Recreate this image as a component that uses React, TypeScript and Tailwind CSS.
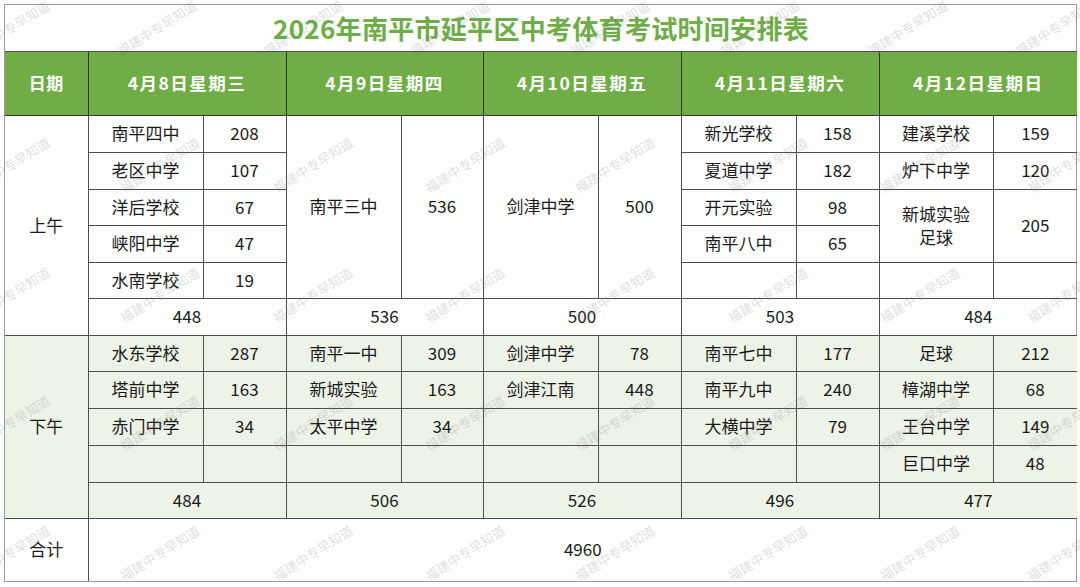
import React from "react";

const FONT = '"Noto Sans CJK SC", "Noto Sans", sans-serif';

type Cell = { t?: React.ReactNode; rs?: number; cs?: number };

const td = "border border-[#4d4d4d] p-0 text-center align-middle";

function Row({ h, cells, bg }: { h: number; cells: Cell[]; bg?: string }) {
  return (
    <tr style={{ height: h }} className={bg}>
      {cells.map((c, i) => (
        <td key={i} rowSpan={c.rs} colSpan={c.cs} className={td}>
          {c.t}
        </td>
      ))}
    </tr>
  );
}

const WM_ROWS: { y: number; xs: number[] }[] = [
  { y: 28, xs: [10, 157, 303, 450, 610, 760, 908, 1055] },
  { y: 165, xs: [10, 160, 313, 465, 615, 768, 920, 1067] },
  { y: 295, xs: [10, 160, 313, 465, 615, 768, 920, 1067] },
  { y: 423, xs: [10, 160, 313, 465, 615, 768, 920, 1067] },
  { y: 553, xs: [10, 160, 313, 465, 615, 768, 920, 1067] },
];

export default function App() {
  const widths = [83, 115, 83, 115, 82, 115, 83, 115, 83, 114, 84];
  const heads = ["4月8日星期三", "4月9日星期四", "4月10日星期五", "4月11日星期六", "4月12日星期日"];
  const pm = "bg-[#eef3e8]";
  return (
    <div
      className="relative w-[1080px] h-[587px] bg-white overflow-hidden text-[#1a1a1a]"
      style={{ fontFamily: FONT }}
    >
      <div className="ml-[4px] mt-[4px] w-[1073px] border border-[#9c9c9c]">
        <table className="table-fixed border-collapse border-hidden w-full text-[17px] leading-[1.35]">
          <colgroup>
            {widths.map((w, i) => (
              <col key={i} style={{ width: w }} />
            ))}
          </colgroup>
          <tbody>
            <tr className="h-[46px]">
              <td colSpan={11} className={td + " text-[26px] font-bold text-[#6fad4a] tracking-[0.3px]"}>
                2026年南平市延平区中考体育考试时间安排表
              </td>
            </tr>
            <tr className="h-[64px] bg-[#70ad47] text-white font-bold">
              <td className={td + " border-[#333] tracking-[0.5px]"}>日期</td>
              {heads.map((h) => (
                <td key={h} colSpan={2} className={td + " border-[#333] text-[17.5px] tracking-[1.5px]"}>
                  {h}
                </td>
              ))}
            </tr>
            <Row
              h={37}
              cells={[
                { t: "上午", rs: 6 },
                { t: "南平四中" },
                { t: "208" },
                { t: "南平三中", rs: 5 },
                { t: "536", rs: 5 },
                { t: "剑津中学", rs: 5 },
                { t: "500", rs: 5 },
                { t: "新光学校" },
                { t: "158" },
                { t: "建溪学校" },
                { t: "159" },
              ]}
            />
            <Row
              h={37}
              cells={[
                { t: "老区中学" },
                { t: "107" },
                { t: "夏道中学" },
                { t: "182" },
                { t: "炉下中学" },
                { t: "120" },
              ]}
            />
            <Row
              h={36}
              cells={[
                { t: "洋后学校" },
                { t: "67" },
                { t: "开元实验" },
                { t: "98" },
                {
                  t: (
                    <>
                      新城实验
                      <br />
                      足球
                    </>
                  ),
                  rs: 2,
                },
                { t: "205", rs: 2 },
              ]}
            />
            <Row
              h={37}
              cells={[{ t: "峡阳中学" }, { t: "47" }, { t: "南平八中" }, { t: "65" }]}
            />
            <Row
              h={36}
              cells={[{ t: "水南学校" }, { t: "19" }, {}, {}, {}, {}]}
            />
            <Row
              h={37}
              cells={[
                { t: "448", cs: 2 },
                { t: "536", cs: 2 },
                { t: "500", cs: 2 },
                { t: "503", cs: 2 },
                { t: "484", cs: 2 },
              ]}
            />
            <Row
              h={36}
              bg={pm}
              cells={[
                { t: "下午", rs: 5 },
                { t: "水东学校" },
                { t: "287" },
                { t: "南平一中" },
                { t: "309" },
                { t: "剑津中学" },
                { t: "78" },
                { t: "南平七中" },
                { t: "177" },
                { t: "足球" },
                { t: "212" },
              ]}
            />
            <Row
              h={37}
              bg={pm}
              cells={[
                { t: "塔前中学" },
                { t: "163" },
                { t: "新城实验" },
                { t: "163" },
                { t: "剑津江南" },
                { t: "448" },
                { t: "南平九中" },
                { t: "240" },
                { t: "樟湖中学" },
                { t: "68" },
              ]}
            />
            <Row
              h={37}
              bg={pm}
              cells={[
                { t: "赤门中学" },
                { t: "34" },
                { t: "太平中学" },
                { t: "34" },
                {},
                {},
                { t: "大横中学" },
                { t: "79" },
                { t: "王台中学" },
                { t: "149" },
              ]}
            />
            <Row
              h={37}
              bg={pm}
              cells={[{}, {}, {}, {}, {}, {}, {}, {}, { t: "巨口中学" }, { t: "48" }]}
            />
            <Row
              h={36}
              bg={pm}
              cells={[
                { t: "484", cs: 2 },
                { t: "506", cs: 2 },
                { t: "526", cs: 2 },
                { t: "496", cs: 2 },
                { t: "477", cs: 2 },
              ]}
            />
            <Row h={63} cells={[{ t: "合计" }, { t: "4960", cs: 10 }]} />
          </tbody>
        </table>
      </div>
      {WM_ROWS.flatMap((r, ri) =>
        r.xs.map((x, xi) => (
          <span
            key={ri + "-" + xi}
            className="pointer-events-none absolute -translate-x-1/2 -translate-y-1/2 -rotate-[32deg] whitespace-nowrap text-[13px] text-[rgba(110,110,110,0.24)]"
            style={{ left: x, top: r.y }}
          >
            福建中专早知道
          </span>
        ))
      )}
    </div>
  );
}
